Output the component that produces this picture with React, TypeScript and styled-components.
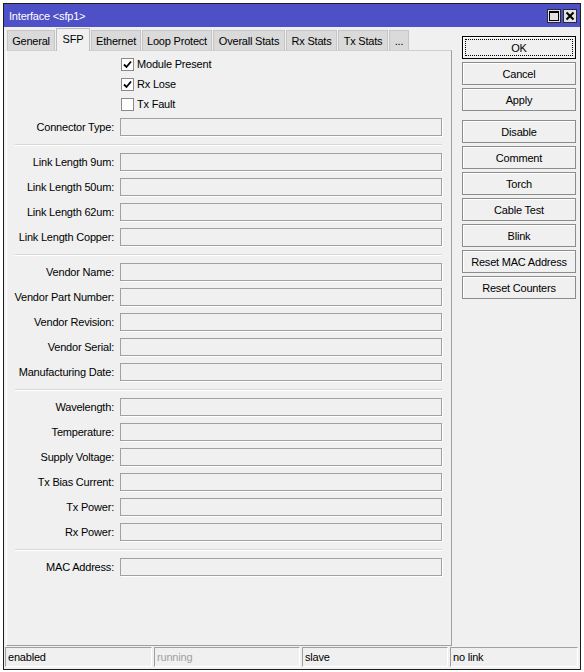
import React from 'react'
import styled, { createGlobalStyle } from 'styled-components'

const GlobalStyle = createGlobalStyle`
  html, body {
    margin: 0;
    padding: 0;
    background: #ffffff;
  }
  body {
    font-family: "Liberation Sans", Arial, sans-serif;
    font-size: 11px;
    letter-spacing: -0.2px;
    color: #000;
  }
`

const TABS = [
  { name: 'General', width: 48 },
  { name: 'SFP', width: 34, active: true },
  { name: 'Ethernet', width: 50 },
  { name: 'Loop Protect', width: 70 },
  { name: 'Overall Stats', width: 72 },
  { name: 'Rx Stats', width: 51 },
  { name: 'Tx Stats', width: 50 },
  { name: '...', width: 20 }
]

const CHECKS = [
  { label: 'Module Present', checked: true },
  { label: 'Rx Lose', checked: true },
  { label: 'Tx Fault', checked: false }
]

const GROUPS = [
  ['Link Length 9um', 'Link Length 50um', 'Link Length 62um', 'Link Length Copper'],
  ['Vendor Name', 'Vendor Part Number', 'Vendor Revision', 'Vendor Serial', 'Manufacturing Date'],
  ['Wavelength', 'Temperature', 'Supply Voltage', 'Tx Bias Current', 'Tx Power', 'Rx Power'],
  ['MAC Address']
]

const BUTTONS = [
  { label: 'OK', focused: true },
  { label: 'Cancel' },
  { label: 'Apply' },
  { label: 'Disable', spaced: true },
  { label: 'Comment' },
  { label: 'Torch' },
  { label: 'Cable Test' },
  { label: 'Blink' },
  { label: 'Reset MAC Address' },
  { label: 'Reset Counters' }
]

const STATUS = [
  { text: 'enabled' },
  { text: 'running', dim: true },
  { text: 'slave' },
  { text: 'no link' }
]

function MaximizeIcon (): React.ReactElement {
  return (
    <svg width="10" height="10" viewBox="0 0 10 10">
      <rect x="0.5" y="0.5" width="9" height="9" fill="none" stroke="#000" strokeWidth="1" />
      <rect x="0" y="0" width="10" height="2" fill="#000" />
    </svg>
  )
}

function CloseIcon (): React.ReactElement {
  return (
    <svg width="10" height="10" viewBox="0 0 10 10">
      <path d="M1.5 1.5 L8.5 8.5 M8.5 1.5 L1.5 8.5" stroke="#000" strokeWidth="2" />
    </svg>
  )
}

function CheckMark (): React.ReactElement {
  return (
    <svg width="9" height="9" viewBox="0 0 9 9">
      <path d="M1 4.5 L3.5 7 L8 1.5" fill="none" stroke="#000" strokeWidth="1.8" />
    </svg>
  )
}

function App (): React.ReactElement {
  return (
    <>
      <GlobalStyle />
      <StyledWindow>
        <StyledTitleBar>
          <StyledTitle>Interface &lt;sfp1&gt;</StyledTitle>
          <StyledTitleButtons>
            <StyledTitleButton><MaximizeIcon /></StyledTitleButton>
            <StyledTitleButton><CloseIcon /></StyledTitleButton>
          </StyledTitleButtons>
        </StyledTitleBar>
        <StyledMain>
          <StyledLeftColumn>
            <StyledTabs>
              {TABS.map((tab) =>
                <StyledTab key={tab.name} $width={tab.width} $active={tab.active === true}>
                  {tab.name}
                </StyledTab>
              )}
            </StyledTabs>
            <StyledPanel>
              {CHECKS.map((check) =>
                <StyledCheckRow key={check.label}>
                  <span />
                  <StyledCheckLabel>
                    <StyledCheckBox>{check.checked && <CheckMark />}</StyledCheckBox>
                    {check.label}
                  </StyledCheckLabel>
                </StyledCheckRow>
              )}
              <StyledFieldRow>
                <StyledLabel>Connector Type:</StyledLabel>
                <StyledInput />
              </StyledFieldRow>
              {GROUPS.map((group, i) =>
                <React.Fragment key={i}>
                  <StyledSeparator />
                  {group.map((label) =>
                    <StyledFieldRow key={label}>
                      <StyledLabel>{label}:</StyledLabel>
                      <StyledInput />
                    </StyledFieldRow>
                  )}
                </React.Fragment>
              )}
            </StyledPanel>
          </StyledLeftColumn>
          <StyledButtonColumn>
            {BUTTONS.map((button) =>
              <StyledButton key={button.label} $focused={button.focused === true} $spaced={button.spaced === true}>
                {button.label}
              </StyledButton>
            )}
          </StyledButtonColumn>
        </StyledMain>
        <StyledStatusBar>
          {STATUS.map((cell) =>
            <StyledStatusCell key={cell.text} $dim={cell.dim === true}>{cell.text}</StyledStatusCell>
          )}
        </StyledStatusBar>
      </StyledWindow>
    </>
  )
}

export default App

const StyledWindow = styled.div`
  box-sizing: border-box;
  margin: 3px 0 0 3px;
  width: 578px;
  height: 667px;
  border: 1px solid #1e1e1e;
  background: #f0f0f0;
  display: flex;
  flex-direction: column;
`
const StyledTitleBar = styled.div`
  height: 23px;
  flex: none;
  background: #4e50c8;
  display: flex;
  align-items: center;
  justify-content: space-between;
  padding: 0 3px 0 5px;
`
const StyledTitle = styled.div`
  color: #ffffff;
  font-size: 11px;
`
const StyledTitleButtons = styled.div`
  display: flex;
  gap: 2px;
`
const StyledTitleButton = styled.div`
  box-sizing: border-box;
  width: 14px;
  height: 14px;
  border: 1px solid #2a2a2a;
  background: #e2e2e2;
  display: flex;
  align-items: center;
  justify-content: center;
`
const StyledMain = styled.div`
  flex: 1;
  display: flex;
  padding: 1px 4px 0 2px;
  min-height: 0;
`
const StyledLeftColumn = styled.div`
  width: 446px;
  display: flex;
  flex-direction: column;
`
const StyledTabs = styled.div`
  height: 22px;
  display: flex;
  align-items: flex-end;
  gap: 1px;
  padding-left: 1px;
  position: relative;
  z-index: 1;
`
const StyledTab = styled.div<{ $width: number, $active: boolean }>`
  box-sizing: border-box;
  width: ${(p) => p.$width}px;
  height: ${(p) => (p.$active ? 23 : 20)}px;
  margin-bottom: ${(p) => (p.$active ? -1 : 0)}px;
  border: 1px solid ${(p) => (p.$active ? '#bdbdbd' : '#c6c6c6')};
  border-bottom: none;
  background: ${(p) => (p.$active ? '#f0f0f0' : '#dadada')};
  display: flex;
  align-items: center;
  justify-content: center;
  padding-bottom: ${(p) => (p.$active ? 2 : 0)}px;
  white-space: nowrap;
`
const StyledPanel = styled.div`
  flex: 1;
  box-sizing: border-box;
  border-top: 1px solid #cfcfcf;
  border-left: 1px solid #ffffff;
  border-right: 1px solid #a0a0a0;
  border-bottom: 1px solid #a0a0a0;
  padding: 3px 8px 0 0;
`
const StyledCheckRow = styled.div`
  height: 20px;
  display: grid;
  grid-template-columns: 107px 1fr;
  column-gap: 6px;
  align-items: center;
`
const StyledCheckLabel = styled.div`
  display: flex;
  align-items: center;
  gap: 3px;
  padding-left: 1px;
`
const StyledCheckBox = styled.span`
  box-sizing: border-box;
  width: 13px;
  height: 13px;
  border: 1px solid #8a8a8a;
  background: #ffffff;
  display: flex;
  align-items: center;
  justify-content: center;
`
const StyledFieldRow = styled.div`
  height: 25px;
  display: grid;
  grid-template-columns: 107px 1fr;
  column-gap: 6px;
  align-items: center;
`
const StyledLabel = styled.div`
  text-align: right;
  white-space: nowrap;
`
const StyledInput = styled.div`
  box-sizing: border-box;
  height: 18px;
  margin-right: 1px;
  border: 1px solid #a0a0a0;
  background: #f0f0f0;
  box-shadow: 1px 1px 0 #ffffff;
`
const StyledSeparator = styled.div`
  height: 1px;
  margin: 5px 1px 4px 8px;
  background: #d7d7d7;
  box-shadow: 0 1px 0 #ffffff;
`
const StyledButtonColumn = styled.div`
  width: 114px;
  margin-left: 10px;
  padding-top: 8px;
  display: flex;
  flex-direction: column;
  gap: 3px;
`
const StyledButton = styled.div<{ $focused: boolean, $spaced: boolean }>`
  box-sizing: border-box;
  height: 23px;
  margin-top: ${(p) => (p.$spaced ? 6 : 0)}px;
  border: 1px solid ${(p) => (p.$focused ? '#000000' : '#8c8c8c')};
  background: #f0f0f0;
  box-shadow: inset 1px 1px 0 #ffffff;
  outline: ${(p) => (p.$focused ? '1px dotted #000' : 'none')};
  outline-offset: -4px;
  display: flex;
  align-items: center;
  justify-content: center;
  white-space: nowrap;
`
const StyledStatusBar = styled.div`
  flex: none;
  display: grid;
  grid-template-columns: 147px 146px 146px 1fr;
  gap: 2px;
  margin: 1px 2px 2px 1px;
`
const StyledStatusCell = styled.div<{ $dim: boolean }>`
  box-sizing: border-box;
  height: 20px;
  border-top: 1px solid #a0a0a0;
  border-left: 1px solid #a0a0a0;
  border-right: 1px solid #ffffff;
  border-bottom: 1px solid #ffffff;
  padding-left: 2px;
  display: flex;
  align-items: center;
  color: ${(p) => (p.$dim ? '#a0a0a0' : '#000000')};
`
